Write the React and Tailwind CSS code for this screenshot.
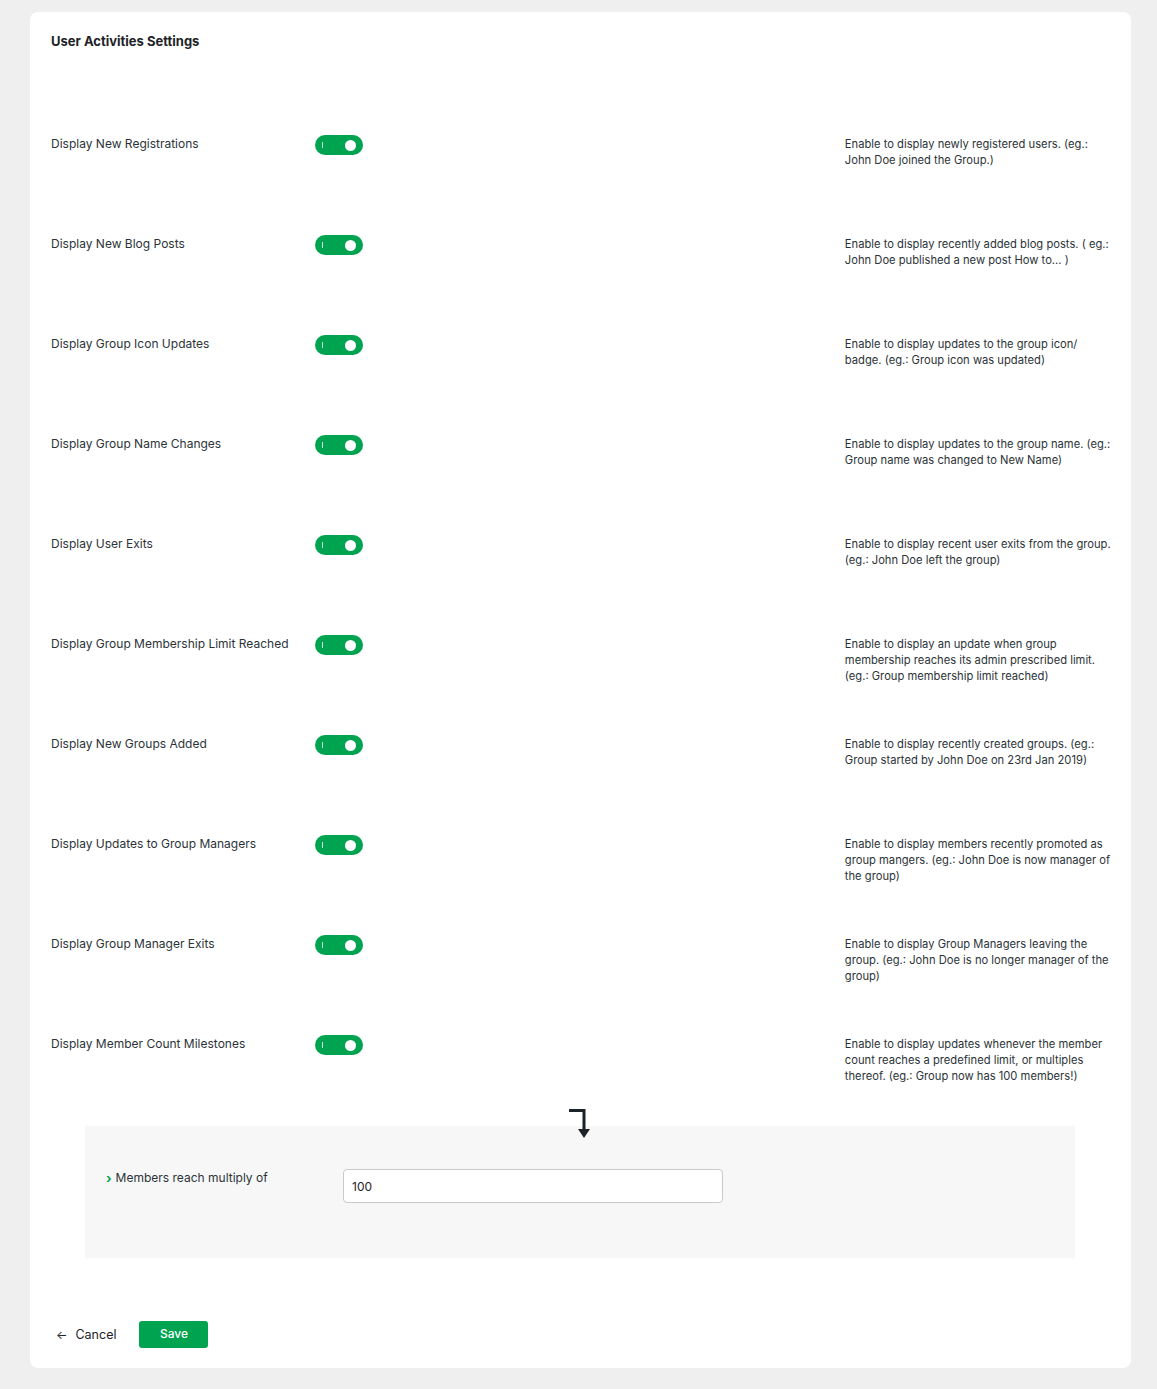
import React from "react";

const rows = [
  ["Display New Registrations", ["Enable to display newly registered users. (eg.:", "John Doe joined the Group.)"]],
  ["Display New Blog Posts", ["Enable to display recently added blog posts. ( eg.:", "John Doe published a new post How to... )"]],
  ["Display Group Icon Updates", ["Enable to display updates to the group icon/", "badge. (eg.: Group icon was updated)"]],
  ["Display Group Name Changes", ["Enable to display updates to the group name. (eg.:", "Group name was changed to New Name)"]],
  ["Display User Exits", ["Enable to display recent user exits from the group.", "(eg.: John Doe left the group)"]],
  ["Display Group Membership Limit Reached", ["Enable to display an update when group", "membership reaches its admin prescribed limit.", "(eg.: Group membership limit reached)"]],
  ["Display New Groups Added", ["Enable to display recently created groups. (eg.:", "Group started by John Doe on 23rd Jan 2019)"]],
  ["Display Updates to Group Managers", ["Enable to display members recently promoted as", "group mangers. (eg.: John Doe is now manager of", "the group)"]],
  ["Display Group Manager Exits", ["Enable to display Group Managers leaving the", "group. (eg.: John Doe is no longer manager of the", "group)"]],
  ["Display Member Count Milestones", ["Enable to display updates whenever the member", "count reaches a predefined limit, or multiples", "thereof. (eg.: Group now has 100 members!)"]],
];

function Toggle() {
  return (
    <div className="relative mt-[1px] h-[20px] w-[48px] rounded-full bg-[#00a34f]">
      <span className="absolute left-[7px] top-[7px] h-[6px] w-[1px] bg-white/80" />
      <span className="absolute right-[7px] top-[4.5px] h-[11px] w-[11px] rounded-full bg-white" />
    </div>
  );
}

export default function App() {
  return (
    <div
      className="min-h-[1389px] bg-[#efefef] pl-[30px] pr-[26px] pt-[12px]"
      style={{ fontFamily: "Inter, 'Noto Sans', sans-serif" }}
    >
      <div className="flex h-[1356px] w-[1101px] flex-col rounded-[8px] bg-white pl-[21px] pr-[20px] pt-[19px]">
        <h2 className="h-[20px] text-[13px] font-bold leading-[20px] text-[#1d2327]">
          User Activities Settings
        </h2>
        <div className="mt-[83px] flex flex-col">
          {rows.map(([label, desc], i) => (
            <div
              key={i}
              className={`flex items-start ${i === rows.length - 1 ? "h-[74px]" : "h-[100px]"}`}
            >
              <div className="w-[266px] text-[12px] leading-[20px] text-[#2c3338]">{label}</div>
              <Toggle />
              <div className="ml-[482px] mt-[2px] w-[268px] text-[11.2px] leading-[16px] text-[#2c3338]">
                {desc.map((l, j) => (
                  <div key={j} className="whitespace-nowrap">{l}</div>
                ))}
              </div>
            </div>
          ))}
        </div>
        <div className="relative z-10 flex h-[18px] justify-center">
          <svg width="24" height="30" viewBox="0 0 24 30" className="shrink-0 overflow-visible">
            <path d="M0 2.5 H15 V22" fill="none" stroke="#1d2327" strokeWidth="3" />
            <path d="M9 21 H21 L15 30 Z" fill="#1d2327" />
          </svg>
        </div>
        <div className="ml-[34px] flex h-[132px] w-[990px] items-start bg-[#f7f7f7] pl-[21px] pt-[43px]">
          <div className="flex w-[237px] items-center gap-[4px] text-[12px] leading-[18px] text-[#2c3338]">
            <span className="text-[13px] font-bold text-[#00a34f]">›</span>
            <span>Members reach multiply of</span>
          </div>
          <input
            defaultValue="100"
            className="h-[34px] w-[380px] rounded-[4px] border border-[#c9cacc] bg-white px-[8px] text-[12px] text-[#1d2327] outline-none"
          />
        </div>
        <div className="ml-[5px] mt-[63px] flex items-center">
          <div className="flex items-center text-[12.5px] text-[#1d2327]">
            <span className="mr-[8px] text-[12px]">←</span>
            <span className="mt-[2px]">Cancel</span>
          </div>
          <button className="ml-[23px] h-[27px] w-[69px] rounded-[3px] bg-[#00a34f] pb-[2px] text-[12px] font-medium text-white">
            Save
          </button>
        </div>
      </div>
    </div>
  );
}
